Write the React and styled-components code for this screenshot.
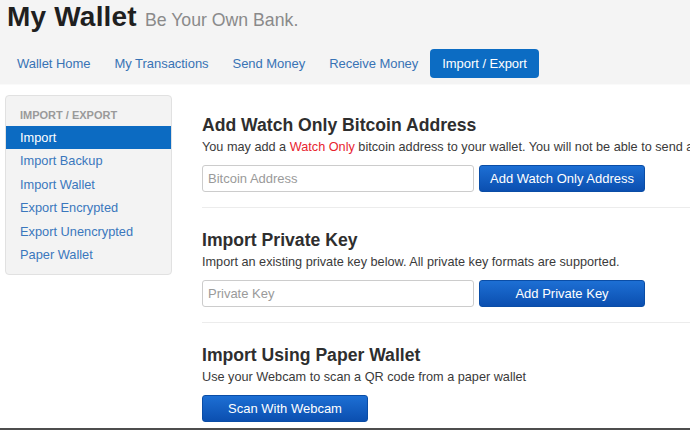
import React from 'react';
import styled, { createGlobalStyle } from 'styled-components';

const GlobalStyle = createGlobalStyle`
  html, body {
    margin: 0;
    padding: 0;
    background: #fff;
  }
  body {
    font-family: "Liberation Sans", Arial, sans-serif;
    color: #333;
  }
`;

const Page = styled.div`
  width: 690px;
  height: 430px;
  box-sizing: border-box;
  overflow: hidden;
  border-bottom: 2px solid #4d4d4d;
  background: #fff;
`;

const Header = styled.header`
  height: 85px;
  box-sizing: border-box;
  background: #f4f4f4;
  border-bottom: 1px solid #fafafa;
  padding: 0 5px;
`;

const Brand = styled.div`
  display: flex;
  align-items: baseline;
  gap: 8px;
  padding: 1px 0 0 2px;
  height: 49px;
  box-sizing: border-box;
  white-space: nowrap;
`;

const BrandName = styled.h1`
  margin: 0;
  font-size: 28px;
  line-height: 32px;
  font-weight: bold;
  color: #1f1f1f;
  letter-spacing: 0.2px;
`;

const Tagline = styled.span`
  font-size: 17.7px;
  color: #8a8a8a;
`;

const Nav = styled.nav`
  display: flex;
`;

const NavItem = styled.a`
  display: block;
  padding: 0 12px;
  height: 29px;
  line-height: 30px;
  font-size: 13px;
  letter-spacing: -0.04px;
  border-radius: 4px;
  text-decoration: none;
  white-space: nowrap;
  color: ${p => (p.$active ? '#fff' : '#3873b5')};
  background: ${p => (p.$active ? '#0c6cc3' : 'transparent')};
`;

const Body = styled.div`
  display: flex;
  align-items: flex-start;
  gap: 30px;
  padding: 8px 0 0 5px;
`;

const Sidebar = styled.aside`
  flex: 0 0 auto;
  width: 167px;
  box-sizing: border-box;
  margin-top: 2px;
  padding: 9px 0 8px;
  background: #f3f3f3;
  border: 1px solid #e1e1e1;
  border-radius: 4px;
`;

const SideHeader = styled.div`
  padding: 0 14px;
  margin-bottom: 1px;
  line-height: 20px;
  font-size: 11px;
  font-weight: bold;
  color: #9a9a9a;
  text-transform: uppercase;
`;

const SideItem = styled.a`
  display: block;
  padding: 3px 14px;
  line-height: 17.4px;
  font-size: 12.8px;
  text-decoration: none;
  white-space: nowrap;
  color: ${p => (p.$active ? '#fff' : '#3a77bd')};
  background: ${p => (p.$active ? '#0c6bc2' : 'transparent')};
`;

const Main = styled.main`
  flex: 1 0 auto;
  min-width: 0;
`;

const Section = styled.section`
  padding: 22px 0 15px;
  border-bottom: 1px solid ${p => (p.$last ? 'transparent' : '#ececec')};
`;

const Heading = styled.h2`
  margin: 0;
  font-size: 17.6px;
  line-height: 20px;
  font-weight: bold;
  color: #2e2e2e;
  white-space: nowrap;
`;

const Desc = styled.p`
  margin: 3px 0 9px;
  font-size: 12.7px;
  line-height: 18px;
  color: #3a3a3a;
  white-space: nowrap;
`;

const Highlight = styled.span`
  color: #e8242f;
`;

const Row = styled.div`
  display: flex;
  gap: 5px;
`;

const Input = styled.input`
  width: 272px;
  height: 27px;
  box-sizing: border-box;
  padding: 0 5px;
  border: 1px solid #cccccc;
  border-radius: 3px;
  font-family: inherit;
  font-size: 13px;
  color: #333;
  background: #fff;

  &::placeholder {
    color: #9a9a9a;
  }
`;

const Button = styled.button`
  width: 166px;
  height: 27px;
  border: 1px solid #0a4da6;
  border-radius: 3px;
  background: linear-gradient(#1d6fd4, #0b4fb0);
  color: #fff;
  font-family: inherit;
  font-size: 13px;
  padding: 0;
  cursor: pointer;
`;

const navItems = ['Wallet Home', 'My Transactions', 'Send Money', 'Receive Money', 'Import / Export'];
const sideItems = ['Import', 'Import Backup', 'Import Wallet', 'Export Encrypted', 'Export Unencrypted', 'Paper Wallet'];

export default function App() {
  return (
    <Page>
      <GlobalStyle />
      <Header>
        <Brand>
          <BrandName>My Wallet</BrandName>
          <Tagline>Be Your Own Bank.</Tagline>
        </Brand>
        <Nav>
          {navItems.map(item => (
            <NavItem key={item} $active={item === 'Import / Export'}>
              {item}
            </NavItem>
          ))}
        </Nav>
      </Header>

      <Body>
        <Sidebar>
          <SideHeader>Import / Export</SideHeader>
          {sideItems.map(item => (
            <SideItem key={item} $active={item === 'Import'}>
              {item}
            </SideItem>
          ))}
        </Sidebar>

        <Main>
          <Section>
            <Heading>Add Watch Only Bitcoin Address</Heading>
            <Desc>
              You may add a <Highlight>Watch Only</Highlight> bitcoin address to your wallet. You will not be able to send
              any funds from it.
            </Desc>
            <Row>
              <Input placeholder="Bitcoin Address" />
              <Button>Add Watch Only Address</Button>
            </Row>
          </Section>

          <Section>
            <Heading>Import Private Key</Heading>
            <Desc>Import an existing private key below. All private key formats are supported.</Desc>
            <Row>
              <Input placeholder="Private Key" />
              <Button>Add Private Key</Button>
            </Row>
          </Section>

          <Section $last>
            <Heading>Import Using Paper Wallet</Heading>
            <Desc>Use your Webcam to scan a QR code from a paper wallet</Desc>
            <Button>Scan With Webcam</Button>
          </Section>
        </Main>
      </Body>
    </Page>
  );
}
